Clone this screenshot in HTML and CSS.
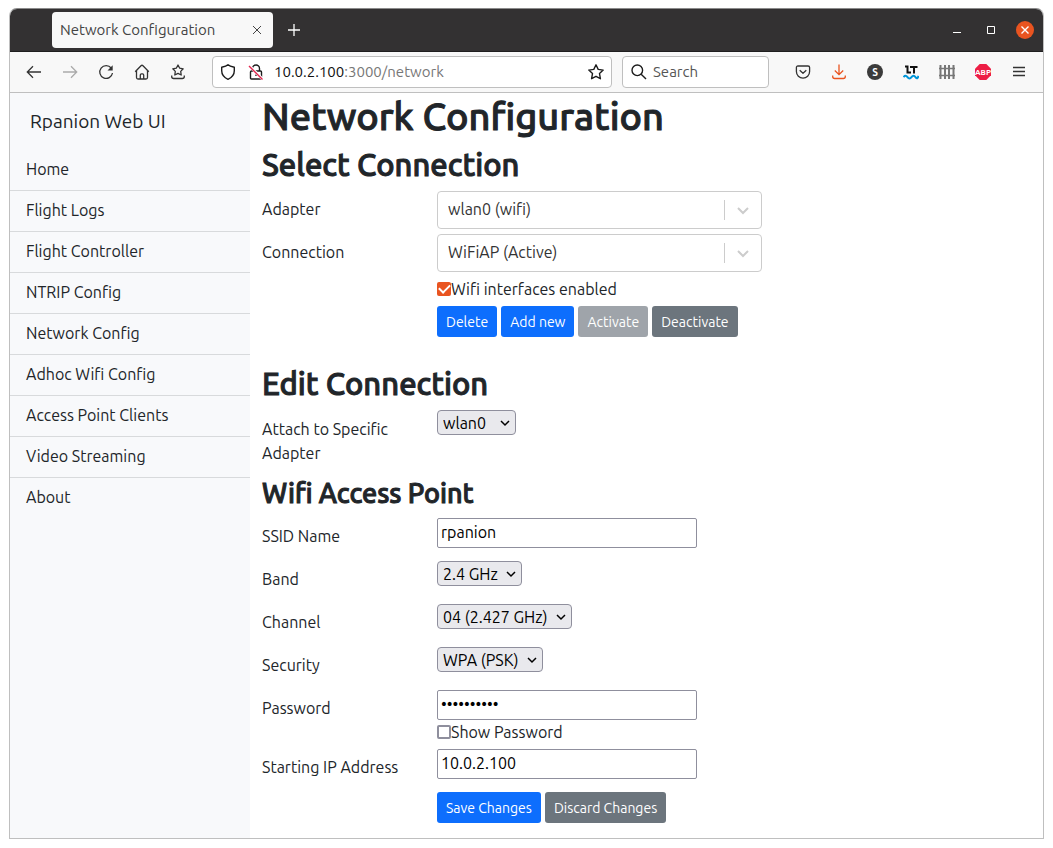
FILE: index.html
```html
<!DOCTYPE html>
<html lang="en">
<head>
<meta charset="utf-8">
<meta name="viewport" content="width=device-width, initial-scale=1">
<title>Network Configuration</title>
<link rel="stylesheet" href="styles.css">
</head>
<body>
<div class="window">
  <header class="titlebar">
    <div class="tab">
      <span class="tab-title">Network Configuration</span>
      <button class="tab-close" aria-label="Close tab"><svg width="10" height="10" viewBox="0 0 10 10"><path d="M1 1l8 8M9 1l-8 8" stroke="#444"/></svg></button>
    </div>
    <button class="tool" aria-label="New tab"><svg class="plus" width="12" height="12" viewBox="0 0 12 12"><path d="M6 0v12M0 6h12"/></svg></button>
    <div class="window-buttons">
      <button class="win-button" aria-label="Minimize"><svg width="10" height="10" viewBox="0 0 10 10"><path d="M1 7.500h8" stroke="#fff"/></svg></button>
      <button class="win-button" aria-label="Maximize"><svg width="10" height="10" viewBox="0 0 10 10"><path d="M1.500 1.500h7v7h-7z" stroke="#fff"/></svg></button>
      <button class="win-button" aria-label="Close"><svg width="18" height="18" viewBox="0 0 18 18"><circle cx="9" cy="9" r="9" fill="#e95420"/><path d="M5.500 5.500l7 7M12.500 5.500l-7 7" stroke="#fff" stroke-width="1.4"/></svg></button>
    </div>
  </header>
  <div class="toolbar">
    <div class="tools">
      <button class="tool" aria-label="Back"><svg width="16" height="16" viewBox="0 0 16 16"><path d="M15 8H1.500M7 2.300L1.300 8 7 13.700"/></svg></button>
      <button class="tool faded" aria-label="Forward"><svg width="16" height="16" viewBox="0 0 16 16"><path d="M1 8h13.500M9 2.300L14.700 8 9 13.700"/></svg></button>
      <button class="tool" aria-label="Reload"><svg width="16" height="16" viewBox="0 0 16 16"><path d="M13.200 4A6.400 6.400 0 1 0 14.500 9"/><path d="M14.700 1.300v5.200H9.500z" fill="#333" stroke="none"/></svg></button>
      <button class="tool" aria-label="Home"><svg width="16" height="16" viewBox="0 0 16 16"><path d="M1.200 7.700L7 1.700q1-1 2 0l5.800 6M2.500 6.500v7q0 1.500 1.500 1.500h8q1.500 0 1.500-1.500v-7M6.300 15v-4q0-1.200 1.200-1.200h1q1.200 0 1.200 1.200v4"/></svg></button>
      <button class="tool" aria-label="Bookmarks"><svg width="16" height="16" viewBox="0 0 16 16"><path d="M8 1l1.700 3.200 3.500.6-2.500 2.600.5 3.600L8 9.400 4.800 11l.5-3.600-2.500-2.600 3.500-.6zM1.700 11.500v1q0 2 2 2h8.600q2 0 2-2v-1" stroke-linejoin="round"/></svg></button>
    </div>
    <div class="urlbar">
      <svg class="dark" width="16" height="16" viewBox="0 0 16 16"><path d="M8 .8C6.500 2.300 4 2.800 1.700 3.200v3.600C1.700 10.500 4 13.500 8 15.300c4-1.800 6.300-4.800 6.300-8.500V3.200C12 2.800 9.500 2.300 8 .8z" stroke-linejoin="round"/></svg>
      <svg class="dark lock" width="16" height="16" viewBox="0 0 16 16"><path d="M4.500 7V4.500a3.500 3.500 0 0 1 7 0V7M3.500 7h9q1 0 1 1v6q0 1-1 1h-9q-1 0-1-1V8q0-1 1-1zM8 10.500v1.500"/><path d="M1 1.500l14 14" stroke="#fff" stroke-width="3"/><path d="M1 2l13.500 13.500" stroke="#e22850" stroke-width="1.400"/></svg>
      <a class="address" href="#"><span class="host">10.0.2.100</span>:3000/network</a>
      <svg class="dark" width="16" height="16" viewBox="0 0 16 16"><path d="M8 .8l2.200 4.600 5 .7-3.700 3.500.9 5.100L8 12.300l-4.400 2.400.9-5.100L.8 6.100l5-.7z" stroke-linejoin="round"/></svg>
    </div>
    <label class="search">
      <svg class="dark" width="16" height="16" viewBox="0 0 16 16"><circle cx="6.300" cy="6.300" r="5.300"/><path d="M10.200 10.200L15 15"/></svg>
      <input class="search-input" type="text" placeholder="Search" aria-label="Search">
    </label>
    <div class="tools">
      <button class="tool" aria-label="Pocket"><svg width="16" height="16" viewBox="0 0 16 16"><path d="M3 2h10q1.600 0 1.600 1.600V7.500a6.600 6.600 0 0 1-13.200 0V3.600Q1.400 2 3 2zM4.700 6.200L8 9.300l3.300-3.100" stroke-linejoin="round"/></svg></button>
      <button class="tool download" aria-label="Downloads"><svg width="16" height="16" viewBox="0 0 16 16"><path d="M8 .5v10M3.800 6.500L8 10.600l4.200-4.100M1.700 11.500v1q0 2 2 2h8.600q2 0 2-2v-1"/></svg></button>
      <button class="tool" aria-label="Stylus"><svg width="16" height="16" viewBox="0 0 16 16"><circle cx="8" cy="8" r="8" fill="#3b3b3b" stroke="none"/><text class="badge-s" x="8" y="11.500">S</text></svg></button>
      <button class="tool" aria-label="LanguageTool"><svg width="16" height="16" viewBox="0 0 16 16"><path d="M2 2.500h2.500v6H8M7 3h7.500M11 3v6.500" stroke="#111" stroke-width="2"/><path d="M.5 13.200q2-2.800 4 0t4 0 4 0 3-1.400" stroke="#0095d8" stroke-width="2"/></svg></button>
      <button class="tool fence" aria-label="Containers"><svg width="16" height="16" viewBox="0 0 16 16"><path d="M1.500 1v14M6 1v14M10 1v14M14.500 1v14" stroke-width="2"/><path d="M0 4.500h16M0 11.500h16"/></svg></button>
      <button class="tool" aria-label="Adblock Plus"><svg width="16" height="16" viewBox="0 0 16 16"><path d="M4.700 0h6.600L16 4.700v6.600L11.300 16H4.700L0 11.300V4.700z" fill="#ed1e45" stroke="none"/><text class="badge-abp" x="8" y="11">ABP</text></svg></button>
      <button class="tool" aria-label="Menu"><svg width="16" height="16" viewBox="0 0 16 16"><path d="M2 3.500h12M2 7.500h12M2 11.500h12"/></svg></button>
    </div>
  </div>
  <div class="page">
    <nav class="sidebar">
      <div class="brand">Rpanion Web UI</div>
      <a class="nav-item" href="#">Home</a>
      <a class="nav-item" href="#">Flight Logs</a>
      <a class="nav-item" href="#">Flight Controller</a>
      <a class="nav-item" href="#">NTRIP Config</a>
      <a class="nav-item" href="#">Network Config</a>
      <a class="nav-item" href="#">Adhoc Wifi Config</a>
      <a class="nav-item" href="#">Access Point Clients</a>
      <a class="nav-item" href="#">Video Streaming</a>
      <a class="nav-item" href="#">About</a>
    </nav>
    <main class="content">
      <h1>Network Configuration</h1>
      <section>
        <h2>Select Connection</h2>
        <div class="row tight">
          <label class="label" for="adapter">Adapter</label>
          <div class="combo">
            <select id="adapter"><option>wlan0 (wifi)</option></select>
            <svg class="combo-mark" width="38" height="20" viewBox="0 0 38 20"><path d="M.5 0v20"/><path d="M14 8l5 5 5-5" stroke-width="2"/></svg>
          </div>
        </div>
        <div class="row tight">
          <label class="label" for="connection">Connection</label>
          <div class="combo">
            <select id="connection"><option>WiFiAP (Active)</option></select>
            <svg class="combo-mark" width="38" height="20" viewBox="0 0 38 20"><path d="M.5 0v20"/><path d="M14 8l5 5 5-5" stroke-width="2"/></svg>
          </div>
        </div>
        <div class="indent">
          <label class="check"><input type="checkbox" checked>Wifi interfaces enabled</label>
          <div class="buttons">
            <button class="btn primary">Delete</button>
            <button class="btn primary">Add new</button>
            <button class="btn secondary" disabled>Activate</button>
            <button class="btn secondary">Deactivate</button>
          </div>
        </div>
      </section>
      <section class="edit">
        <h2>Edit Connection</h2>
        <div class="row attach">
          <label class="label" for="attach">Attach to Specific Adapter</label>
          <div class="pick pick-s"><select id="attach"><option>wlan0</option></select><svg class="pick-mark" width="10" height="8" viewBox="0 0 10 8"><path d="M1 2l4 4 4-4"/></svg></div>
        </div>
        <h3>Wifi Access Point</h3>
        <div class="row">
          <label class="label" for="ssid">SSID Name</label>
          <input class="field" id="ssid" type="text" value="rpanion">
        </div>
        <div class="row">
          <label class="label" for="band">Band</label>
          <div class="pick pick-m"><select id="band"><option>2.4 GHz</option></select><svg class="pick-mark" width="10" height="8" viewBox="0 0 10 8"><path d="M1 2l4 4 4-4"/></svg></div>
        </div>
        <div class="row">
          <label class="label" for="channel">Channel</label>
          <div class="pick pick-xl"><select id="channel"><option>04 (2.427 GHz)</option></select><svg class="pick-mark" width="10" height="8" viewBox="0 0 10 8"><path d="M1 2l4 4 4-4"/></svg></div>
        </div>
        <div class="row">
          <label class="label" for="security">Security</label>
          <div class="pick pick-l"><select id="security"><option>WPA (PSK)</option></select><svg class="pick-mark" width="10" height="8" viewBox="0 0 10 8"><path d="M1 2l4 4 4-4"/></svg></div>
        </div>
        <div class="row password">
          <label class="label" for="password">Password</label>
          <div class="stack">
            <input class="field" id="password" type="password" value="abcdefghij">
            <label class="check"><input type="checkbox">Show Password</label>
          </div>
        </div>
        <div class="row">
          <label class="label" for="ip">Starting IP Address</label>
          <input class="field" id="ip" type="text" value="10.0.2.100">
        </div>
        <div class="indent buttons">
          <button class="btn primary">Save Changes</button>
          <button class="btn secondary">Discard Changes</button>
        </div>
      </section>
    </main>
  </div>
</div>
</body>
</html>
```

FILE: styles.css
```css
* { box-sizing: border-box; }

body {
  margin: 0;
  padding: 8px 9px 9px;
  min-height: 100vh;
  display: flex;
  background: #fff;
  color: #212529;
  font: 16px/24px Ubuntu, "Noto Sans", sans-serif;
}

button, input, select { font: inherit; margin: 0; }
svg { display: block; flex: none; fill: none; }
h1, h2, h3 { margin: 0; font-weight: 500; -webkit-text-stroke: 1px #212529; paint-order: stroke; }

.window {
  flex: 1;
  display: flex;
  flex-direction: column;
  border: 1px solid #bfbfbf;
  border-top-color: #8b8b8b;
  border-radius: 8px 8px 0 0;
  overflow: hidden;
}

/* Title bar */
.titlebar {
  display: flex;
  align-items: center;
  height: 43px;
  padding: 0 1px 0 42px;
  background: #333132;
  border-bottom: 1px solid #1f1e1f;
}
.tab {
  display: flex;
  align-items: center;
  justify-content: space-between;
  width: 221px;
  height: 36px;
  padding: 0 8px;
  margin-right: 3px;
  background: #f8f8f8;
  border-radius: 4px;
  color: #444;
  font-size: 15px;
}
.tab-close, .win-button, .tool {
  display: flex;
  align-items: center;
  justify-content: center;
  padding: 0;
  border: 0;
  background: none;
}
.tab-close { width: 16px; height: 16px; }
.window-buttons { display: flex; margin-left: auto; }
.win-button { width: 34px; height: 34px; }

/* Toolbar */
.toolbar {
  display: flex;
  align-items: center;
  height: 41px;
  padding: 0 6px;
  background: #f8f8f8;
  border-bottom: 1px solid #bfbfbf;
  font-size: 15px;
}
.tools { display: flex; }
.tool { width: 36px; height: 32px; }
.tool svg { stroke: #333; stroke-width: 1.3; }
.tool .plus { stroke: #fff; }
.tool.faded svg { stroke: #aaa; }
.tool.download svg { stroke: #e95420; }
.tool.fence svg { stroke: #777; }
.tool text { stroke: none; fill: #fff; text-anchor: middle; font-weight: 700; }
.badge-s { font-size: 10px; }
.badge-abp { font-size: 8px; }
.dark { stroke: #1c1c1c; stroke-width: 1.4; }
.urlbar, .search {
  display: flex;
  align-items: center;
  height: 32px;
  border: 1px solid #bfbfbf;
  border-radius: 4px;
  background: #fff;
}
.urlbar { flex: 1; margin: 0 10px 0 16px; padding: 0 7px; }
.lock { margin: 0 10px 0 12px; }
.address { flex: 1; color: #777; text-decoration: none; }
.host { color: #111; }
.search { width: 147px; margin-right: 16px; padding: 0 8px; gap: 6px; }
.search-input { width: 100%; min-width: 0; padding: 0; border: 0; outline: 0; background: none; }
.search-input::placeholder { color: #555; opacity: 1; }

/* Page */
.page { flex: 1; display: flex; }
.sidebar { flex: none; width: 240px; background: #f8f9fb; }
.brand { padding: 12px 20px 13px; font-size: 19px; line-height: 32px; }
.nav-item {
  display: block;
  padding: 7px 16px 9px;
  border-bottom: 1px solid #d8dadc;
  color: #212529;
  text-decoration: none;
}
.nav-item:last-child { border-bottom: 0; }
.content { flex: 1; min-width: 0; padding: 0 12px 14px; }
h1 { margin-bottom: 7px; font-size: 38px; line-height: 46px; }
h2 { margin-bottom: 7px; font-size: 31px; line-height: 38px; }
h3 { margin-bottom: 8px; font-size: 27px; line-height: 34px; }
.edit { margin-top: 28px; }

/* Forms */
.row { display: flex; align-items: flex-start; min-height: 31px; margin-bottom: 12px; }
.row.tight { margin-bottom: 5px; }
.row.attach { margin-bottom: 11px; }
.row.password { margin-bottom: 5px; }
.label { flex: none; width: 175px; padding: 6px 24px 0 0; }
.attach .label { padding-top: 7px; }
.indent { margin-left: 175px; }
.combo, .pick { position: relative; }
.combo { width: 325px; }
.combo select {
  display: block;
  appearance: none;
  width: 100%;
  height: 38px;
  padding: 0 48px 2px 10px;
  border: 1px solid #ccc;
  border-radius: 4px;
  background: #fff;
  color: #333;
}
.combo-mark { position: absolute; right: 0; top: 9px; stroke: #ccc; pointer-events: none; }
.pick select {
  display: block;
  appearance: none;
  width: 100%;
  height: 25px;
  padding: 0 20px 2px 5px;
  border: 1px solid #8f8f9d;
  border-radius: 4px;
  background: #e9e9ed;
  color: #000;
}
.pick-mark { position: absolute; right: 6px; top: 9px; stroke: #000; stroke-width: 1.5; pointer-events: none; }
.pick-s { width: 79px; }
.pick-m { width: 85px; }
.pick-l { width: 106px; }
.pick-xl { width: 135px; }
.field {
  display: block;
  width: 260px;
  height: 30px;
  padding: 0 3px 3px;
  border: 1px solid #8f8f9d;
  border-radius: 2px;
  background: #fff;
  color: #000;
}
.check { display: flex; align-items: center; height: 24px; line-height: 22px; padding-bottom: 1px; }
.check input {
  appearance: none;
  display: grid;
  place-items: center;
  width: 14px;
  height: 14px;
  margin-top: 1px;
  border: 2px solid #8f8f9d;
  border-radius: 2px;
  background: #fff;
}
.check input:checked { border-color: #e95420; background: #e95420; }
.check input:checked::before {
  content: "";
  width: 9px;
  height: 5px;
  border: solid #fff;
  border-width: 0 0 2px 2px;
  transform: translateY(-2px) rotate(-45deg);
}
.buttons { display: flex; gap: 4px; }
.check + .buttons { margin-top: 5px; }
.btn {
  height: 31px;
  padding: 0 9px;
  border: 0;
  border-radius: 3px;
  color: #fff;
  font-size: 14px;
  white-space: nowrap;
}
.primary { background: #0d6efd; }
.secondary { background: #6c757d; }
.btn:disabled { opacity: .65; }
```
